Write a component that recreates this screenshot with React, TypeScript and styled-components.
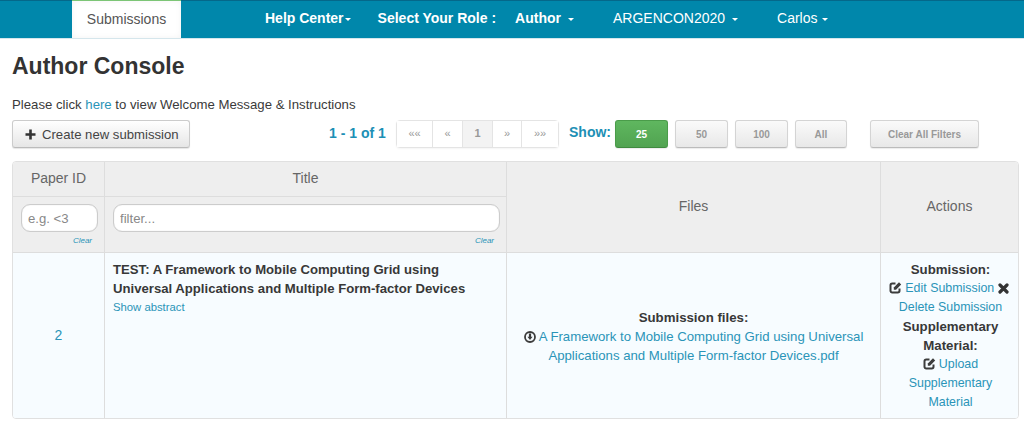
import * as React from "react";
import styled, {createGlobalStyle} from "styled-components";

const GlobalStyle = createGlobalStyle`
    html, body {
        margin: 0;
        padding: 0;
        background: #fff;
    }
    body {
        font-family: "Liberation Sans", Arial, sans-serif;
        font-size: 14px;
        line-height: 1.42857;
        color: #333;
        overflow: hidden;
    }
    * {
        box-sizing: border-box;
    }
`;

const NavBar = styled.nav`
    height: 39px;
    background-color: #0087ab;
    border-top: 1px solid #04688a;
    border-bottom: 1px solid #d5e6ec;
    display: flex;
    align-items: stretch;
    padding-left: 72px;
`;
const ActiveTab = styled.div`
    width: 109px;
    height: 38px;
    margin-top: -1px;
    background: #fff;
    border-top: 1px solid #7cc576;
    color: #555;
    display: flex;
    align-items: center;
    justify-content: center;
    box-shadow: inset 0 0 6px rgba(0, 0, 0, 0.05);
`;
const NavItem = styled.div<{left: number; bold?: boolean}>`
    color: #fff;
    font-weight: ${props => props.bold ? "bold" : "normal"};
    margin-left: ${props => props.left}px;
    display: flex;
    align-items: center;
    padding-bottom: 1px;
    white-space: nowrap;
`;
const Caret = styled.span<{gap: number}>`
    display: inline-block;
    width: 0;
    height: 0;
    margin-left: ${props => props.gap}px;
    margin-top: 1px;
    border-top: 3.5px solid #fff;
    border-left: 3.5px solid transparent;
    border-right: 3.5px solid transparent;
`;

const Page = styled.main`
    padding: 0 12px;
`;
const Heading = styled.h1`
    margin: 12px 0 0;
    font-size: 23px;
    line-height: 30px;
    font-weight: bold;
    color: #333;
`;
const Intro = styled.p`
    margin: 14px 0 0;
    font-size: 13.2px;
    line-height: 19px;
    color: #3a3a3a;
`;
const Link = styled.a`
    color: #2a94b8;
    text-decoration: none;
`;
const Toolbar = styled.div`
    display: flex;
    align-items: flex-start;
    height: 28px;
    margin-top: 6px;
`;
const CreateButton = styled.button`
    width: 178px;
    height: 28px;
    padding: 0 0 0 12px;
    display: flex;
    align-items: center;
    gap: 6px;
    font: 13.15px "Liberation Sans", Arial, sans-serif;
    color: #444;
    border: 1px solid #ccc;
    border-bottom-color: #bbb;
    border-radius: 3px;
    background: linear-gradient(#fff, #e6e6e6);
    box-shadow: 0 1px 1px rgba(0, 0, 0, 0.1);
`;
const Range = styled.span`
    margin-left: 139px;
    margin-top: 3px;
    width: 67px;
    font-size: 14px;
    line-height: 20px;
    font-weight: bold;
    color: #1c8fb5;
    white-space: nowrap;
`;
const Pager = styled.div`
    display: flex;
    height: 28px;
    border: 1px solid #e4e4e4;
    border-radius: 4px;
    background: #fff;
    box-shadow: 0 1px 2px #f5f5f5;
`;
const PagerCell = styled.div<{width: number; current?: boolean}>`
    width: ${props => props.width}px;
    display: flex;
    align-items: center;
    justify-content: center;
    font-size: 11px;
    color: #999;
    background: ${props => props.current ? "#f3f3f3" : "#fff"};
    font-weight: ${props => props.current ? "bold" : "normal"};
    & + & {
        border-left: 1px solid #e4e4e4;
    }
`;
const ShowLabel = styled.span`
    margin-left: 10px;
    margin-top: 2px;
    font-size: 14px;
    line-height: 20px;
    font-weight: bold;
    color: #1c8fb5;
`;
const SizeButton = styled.button<{width: number; left: number; active?: boolean}>`
    width: ${props => props.width}px;
    height: 28px;
    margin-left: ${props => props.left}px;
    padding: 0;
    font: bold 10px "Liberation Sans", Arial, sans-serif;
    color: ${props => props.active ? "#fff" : "#999"};
    border: 1px solid ${props => props.active ? "#4a9c4a" : "#d4d4d4"};
    border-bottom-color: ${props => props.active ? "#3f8a3f" : "#bbb"};
    border-radius: 3px;
    background: ${props => props.active
        ? "linear-gradient(#5fb75f, #51a351)"
        : "linear-gradient(#fafafa, #e8e8e8)"};
    box-shadow: 0 1px 1px rgba(0, 0, 0, 0.08);
`;

const Table = styled.div`
    margin-top: 13px;
    width: 1007px;
    display: grid;
    grid-template-columns: 92px 402px 374px 139px;
    grid-template-rows: 35px 56px 165px;
    border: 1px solid #e0e0e0;
    border-radius: 4px;
    overflow: hidden;
`;
const HeadCell = styled.div<{tall?: boolean; last?: boolean}>`
    background: #eee;
    color: #666;
    font-size: 14px;
    display: flex;
    align-items: center;
    justify-content: center;
    padding-right: ${props => props.last ? "2px" : "0"};
    border-right: ${props => props.last ? "none" : "1px solid #ddd"};
    border-bottom: 1px solid #ddd;
    grid-row: ${props => props.tall ? "span 2" : "auto"};
`;
const FilterCell = styled.div`
    grid-row: 2;
    background: #eee;
    border-right: 1px solid #ddd;
    border-bottom: 1px solid #ddd;
    padding: 7px 6px 0 8px;
    display: flex;
    flex-direction: column;
`;
const FilterInput = styled.input`
    display: block;
    width: 100%;
    height: 28px;
    padding: 0 6px;
    font: 13.15px "Liberation Sans", Arial, sans-serif;
    color: #555;
    background: #fff;
    border: 1px solid #ccc;
    border-radius: 9px;
    box-shadow: inset 0 0 1px rgba(0, 0, 0, 0.2);
    outline: none;
    &::placeholder {
        color: #888;
        opacity: 1;
    }
`;
const ClearLink = styled.a`
    align-self: flex-end;
    margin-top: 3px;
    margin-right: 6px;
    font-size: 8px;
    line-height: 12px;
    font-style: italic;
    color: #2a94b8;
`;
const BodyCell = styled.div<{last?: boolean}>`
    background: #f7fcff;
    border-right: ${props => props.last ? "none" : "1px solid #ddd"};
    font-size: 14px;
    line-height: 19px;
`;
const IdCell = styled(BodyCell)`
    display: flex;
    align-items: center;
    justify-content: center;
    color: #2a94b8;
`;
const TitleCell = styled(BodyCell)`
    padding: 7px 28px 7px 8px;
`;
const PaperTitle = styled.div`
    font-size: 13.15px;
    font-weight: bold;
    color: #383838;
`;
const Abstract = styled(Link)`
    display: block;
    font-size: 11.3px;
`;
const CenterCell = styled(BodyCell)`
    display: flex;
    flex-direction: column;
    align-items: center;
    justify-content: center;
    text-align: center;
    padding: 2px 8px 0;
`;
const ActionsCell = styled(CenterCell)`
    justify-content: flex-start;
    padding: 7px 4px;
`;
const Label = styled.div`
    font-size: 13.25px;
    font-weight: bold;
    color: #383838;
`;
const FileLine = styled.div`
    font-size: 13.2px;
`;
const ActionLine = styled.div<{narrow?: boolean}>`
    font-size: 12.4px;
    padding: 0 ${props => props.narrow ? "8px" : "0"};
`;
const Glyph = styled.svg`
    display: inline-block;
    vertical-align: -2px;
    margin-right: 3px;
`;

const EditIcon = () => (
    <Glyph width="13" height="13" viewBox="0 0 13 13">
        <path d="M6.500 2.500H3.200A1.700 1.700 0 0 0 1.500 4.200v5.600A1.700 1.700 0 0 0 3.200 11.500h5.600a1.700 1.700 0 0 0 1.700-1.700V7.500" fill="none" stroke="#3c3c3c" strokeWidth="2"/>
        <path d="M4.800 6.500 10 1.300 12.200 3.500 7 8.700H4.800Z" fill="#3c3c3c"/>
    </Glyph>
);
const CrossIcon = () => (
    <Glyph width="11" height="11" viewBox="0 0 11 11">
        <path d="M2 2 9 9M9 2 2 9" stroke="#333" strokeWidth="3.200" strokeLinecap="round"/>
    </Glyph>
);
const DownloadIcon = () => (
    <Glyph width="12" height="12" viewBox="0 0 12 12">
        <circle cx="6" cy="6" r="5" fill="none" stroke="#3c3c3c" strokeWidth="1.800"/>
        <path d="M4.900 2.500h2.200v3.200h1.500L6 9 3.400 5.700h1.500Z" fill="#3c3c3c"/>
    </Glyph>
);
const PlusIcon = () => (
    <svg width="11" height="11" viewBox="0 0 11 11">
        <path d="M5.500 0.500v10M0.500 5.500h10" stroke="#333" strokeWidth="2.600"/>
    </svg>
);

export default function App() {
    return (
        <>
            <GlobalStyle/>
            <NavBar>
                <ActiveTab>Submissions</ActiveTab>
                <NavItem left={84} bold>Help Center<Caret gap={1}/></NavItem>
                <NavItem left={27} bold>Select Your Role :</NavItem>
                <NavItem left={19} bold>Author<Caret gap={7}/></NavItem>
                <NavItem left={39}>ARGENCON2020<Caret gap={7}/></NavItem>
                <NavItem left={39}>Carlos<Caret gap={4}/></NavItem>
            </NavBar>
            <Page>
                <Heading>Author Console</Heading>
                <Intro>Please click <Link>here</Link> to view Welcome Message &amp; Instructions</Intro>
                <Toolbar>
                    <CreateButton><PlusIcon/>Create new submission</CreateButton>
                    <Range>1 - 1 of 1</Range>
                    <Pager>
                        <PagerCell width={35}>««</PagerCell>
                        <PagerCell width={30}>«</PagerCell>
                        <PagerCell width={30} current>1</PagerCell>
                        <PagerCell width={29}>»</PagerCell>
                        <PagerCell width={37}>»»</PagerCell>
                    </Pager>
                    <ShowLabel>Show:</ShowLabel>
                    <SizeButton width={53} left={4} active>25</SizeButton>
                    <SizeButton width={53} left={7}>50</SizeButton>
                    <SizeButton width={53} left={7}>100</SizeButton>
                    <SizeButton width={52} left={7}>All</SizeButton>
                    <SizeButton width={109} left={23}>Clear All Filters</SizeButton>
                </Toolbar>
                <Table>
                    <HeadCell>Paper ID</HeadCell>
                    <HeadCell>Title</HeadCell>
                    <HeadCell tall>Files</HeadCell>
                    <HeadCell tall last>Actions</HeadCell>
                    <FilterCell>
                        <FilterInput placeholder="e.g. <3"/>
                        <ClearLink>Clear</ClearLink>
                    </FilterCell>
                    <FilterCell>
                        <FilterInput placeholder="filter..."/>
                        <ClearLink>Clear</ClearLink>
                    </FilterCell>
                    <IdCell>2</IdCell>
                    <TitleCell>
                        <PaperTitle>TEST: A Framework to Mobile Computing Grid using Universal Applications and Multiple Form-factor Devices</PaperTitle>
                        <Abstract>Show abstract</Abstract>
                    </TitleCell>
                    <CenterCell>
                        <Label>Submission files:</Label>
                        <FileLine><DownloadIcon/><Link>A Framework to Mobile Computing Grid using Universal Applications and Multiple Form-factor Devices.pdf</Link></FileLine>
                    </CenterCell>
                    <ActionsCell last>
                        <Label>Submission:</Label>
                        <ActionLine><EditIcon/><Link>Edit Submission</Link> <CrossIcon/><Link>Delete Submission</Link></ActionLine>
                        <Label>Supplementary Material:</Label>
                        <ActionLine narrow><EditIcon/><Link>Upload Supplementary Material</Link></ActionLine>
                    </ActionsCell>
                </Table>
            </Page>
        </>
    );
}
